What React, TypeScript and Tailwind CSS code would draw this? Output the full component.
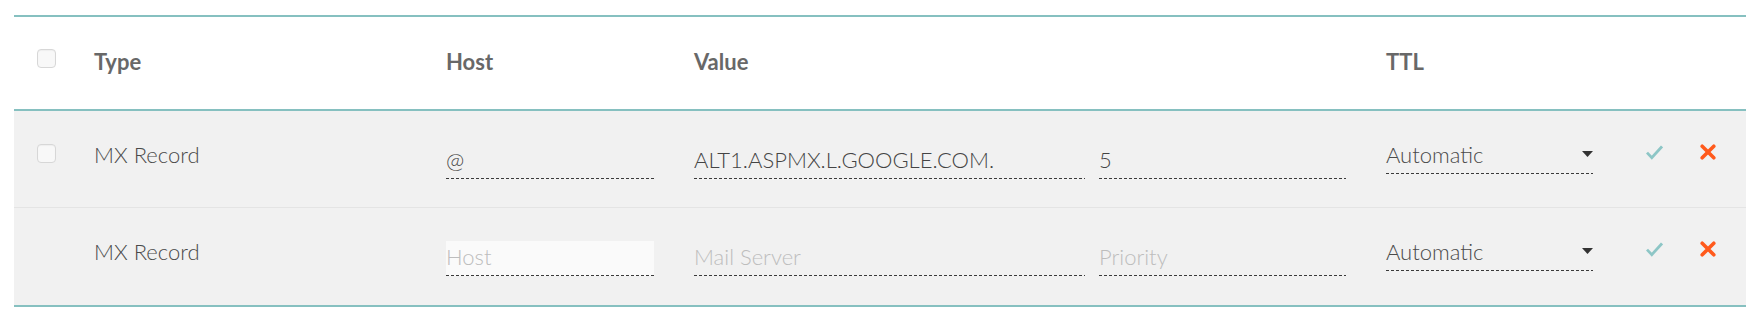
import React from "react";

const dash =
  "bg-[linear-gradient(to_right,#3a3a3a_3px,transparent_3px)] bg-[length:5px_1px] bg-repeat-x bg-[position:0_100%]";

function Checkbox() {
  return (
    <div className="w-[19px] h-[19px] rounded-[4px] border border-[#d7d7d7] bg-[#f8f8f8] shadow-[inset_0_1px_1px_rgba(0,0,0,0.04)]" />
  );
}

function Check() {
  return (
    <svg width="17" height="15" viewBox="0 0 17 15" className="block">
      <path d="M1 7.6 L5.8 12.6 L16 1.4" fill="none" stroke="#8dc6c6" strokeWidth="2.8" strokeLinejoin="miter" />
    </svg>
  );
}

function Cross() {
  return (
    <svg width="16" height="16" viewBox="0 0 16 16" className="block">
      <path d="M2.2 2.2 L13.8 13.8 M13.8 2.2 L2.2 13.8" fill="none" stroke="#ff5a1c" strokeWidth="3.6" strokeLinecap="round" />
    </svg>
  );
}

function Caret() {
  return (
    <svg width="11" height="6" viewBox="0 0 11 6" className="block">
      <path d="M0 0 H11 L5.5 6 Z" fill="#333" />
    </svg>
  );
}

function Field({ value, placeholder, width, filled }: { value?: string; placeholder?: string; width: string; filled?: boolean }) {
  return (
    <input
      readOnly
      defaultValue={value}
      placeholder={placeholder}
      className={`${width} h-[35px] pt-0 pb-[5px] px-0 outline-none text-[22px] leading-[26px] font-light text-[#444] placeholder:text-[#bdbdbd] ${dash} ${
        filled ? "bg-[#fafafa]" : "bg-transparent"
      }`}
    />
  );
}

function Dropdown() {
  return (
    <div className={`w-[207px] flex items-center justify-between pb-[6px] ${dash}`}>
      <span className="text-[22px] leading-[26px] font-light text-[#4a4a4a]">Automatic</span>
      <span className="mb-[3px]">
        <Caret />
      </span>
    </div>
  );
}

function Row({ checkbox, host, value, priority, last }: { checkbox: boolean; host?: string; value?: string; priority?: string; last?: boolean }) {
  return (
    <div className={`flex items-start h-[97px] bg-[#f1f1f1] ${last ? "" : "border-b border-[#e4e4e4]"}`}>
      <div className="w-[80px] pl-[23px] pt-[33px]">{checkbox ? <Checkbox /> : null}</div>
      <div className="w-[352px] pt-[31px] text-[22px] leading-[26px] font-light text-[#4a4a4a]">MX Record</div>
      <div className="w-[248px] pt-[33px]">
        <Field value={host} placeholder="Host" width="w-[208px]" filled={!host} />
      </div>
      <div className="w-[692px] pt-[33px] flex gap-[14px]">
        <Field value={value} placeholder="Mail Server" width="w-[391px]" />
        <Field value={priority} placeholder="Priority" width="w-[247px]" />
      </div>
      <div className="w-[260px] pt-[31px]">
        <Dropdown />
      </div>
      <div className="flex items-center gap-[37px] pt-[33px]">
        <Check />
        <Cross />
      </div>
    </div>
  );
}

export default function App() {
  return (
    <div className="bg-white w-[1759px] h-[319px] pt-[15px] pl-[14px] pr-[13px] font-['Lato','Liberation_Sans',sans-serif]">
      <div className="border-t-2 border-b-2 border-[#86c0c0]">
        <div className="flex items-start h-[94px] border-b-2 border-[#86c0c0] bg-white">
          <div className="w-[80px] pl-[23px] pt-[32px]">
            <Checkbox />
          </div>
          <div className="w-[352px] pt-[32px] text-[22px] leading-[26px] font-bold text-[#686868]">Type</div>
          <div className="w-[248px] pt-[32px] text-[22px] leading-[26px] font-bold text-[#686868]">Host</div>
          <div className="w-[692px] pt-[32px] text-[22px] leading-[26px] font-bold text-[#686868]">Value</div>
          <div className="w-[260px] pt-[32px] text-[22px] leading-[26px] font-bold text-[#686868]">TTL</div>
        </div>
        <Row checkbox host="@" value="ALT1.ASPMX.L.GOOGLE.COM." priority="5" />
        <Row checkbox={false} last />
      </div>
    </div>
  );
}
